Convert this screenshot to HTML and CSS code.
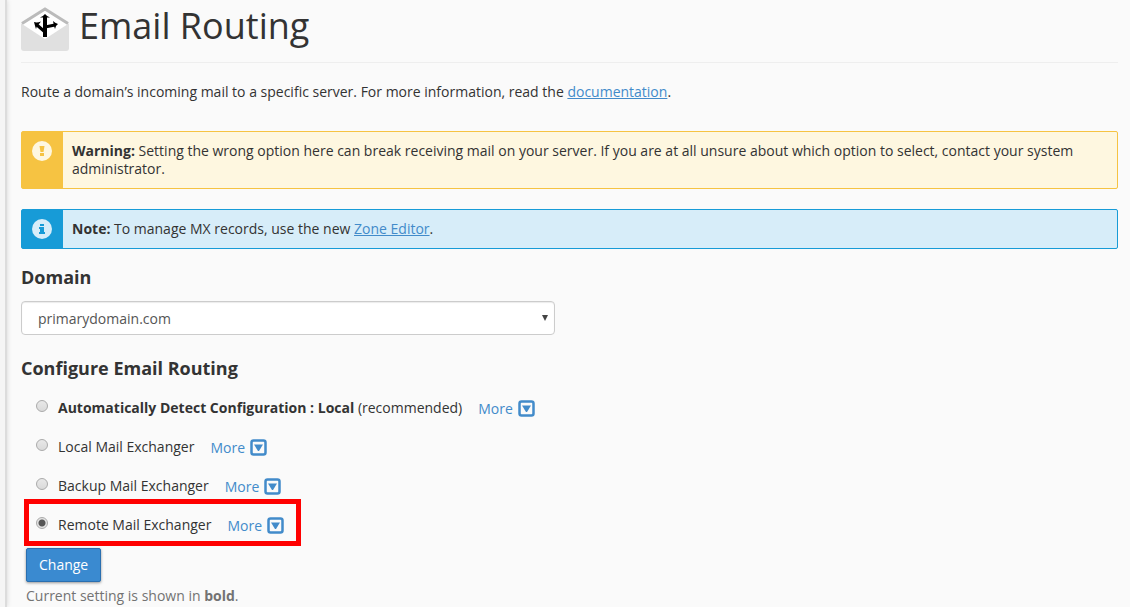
FILE: index.html
```html
<!DOCTYPE html>
<html lang="en">

<head>
    <meta charset="UTF-8">
    <meta name="viewport" content="width=device-width, initial-scale=1.0">
    <title>Email Routing</title>
    <link rel="stylesheet" href="styles.css">
</head>

<body>
    <div class="sidebar"></div>
    <main class="content">
        <h1 class="page-header">
            <svg class="page-icon" width="48" height="44" viewBox="0 0 48 44">
                <path d="M0 17 24 2l24 15v24a3 3 0 0 1-3 3H3a3 3 0 0 1-3-3z" fill="#e0e0e0" />
                <path d="M1 17 24 3l23 14-23 15z" fill="#fff" />
                <path d="M1 16.500 24 2l23 14.500" fill="none" stroke="#bbb" stroke-width="3" />
                <path d="M24 30V9" fill="none" stroke="#000" stroke-width="4" />
                <path d="M24 25l-8-7M24 20l10-2" fill="none" stroke="#000" stroke-width="3" />
                <path d="M19 10.500q3-1 5-3.500 2 2.500 5 3.500zM13 15q3 1 7-.5l-2 2.500-2 2-1 3q-1-3-2-7zM32 14q2 2 5 3-3 2-3 5l-1-3z" fill="#000" />
            </svg>
            <span>Email Routing</span>
        </h1>
        <p class="desc">Route a domain’s incoming mail to a specific server. For more information, read the <a href="#">documentation</a>.</p>

        <div class="alert alert-warning">
            <div class="alert-icon">
                <svg width="20" height="20" viewBox="0 0 20 20">
                    <circle cx="10" cy="10" r="10" fill="#fef7e0" />
                    <path d="M7.500 5h5l-1 6h-3zM8 12h4v3H8z" fill="#f6c342" />
                </svg>
            </div>
            <div class="alert-message"><strong>Warning:</strong> Setting the wrong option here can break receiving mail on your server. If you are at all unsure about which option to select, contact your system administrator.</div>
        </div>

        <div class="alert alert-info">
            <div class="alert-icon">
                <svg width="20" height="20" viewBox="0 0 20 20">
                    <circle cx="10" cy="10" r="10" fill="#d7edf9" />
                    <path d="M8 5h4v2H8zM7 8h5v5h1v2H7v-2h1v-3H7z" fill="#179bd7" />
                </svg>
            </div>
            <div class="alert-message"><strong>Note:</strong> To manage MX records, use the new <a href="#">Zone Editor</a>.</div>
        </div>

        <form>
            <h2 class="title"><label for="domain">Domain</label></h2>
            <div class="select-box">
                <select class="select" id="domain">
                    <option>primarydomain.com</option>
                </select>
                <svg class="caret" width="6" height="6" viewBox="0 0 6 6">
                    <path d="M0 0h6L3 6z" fill="#444" />
                </svg>
            </div>

            <h2 class="title">Configure Email Routing</h2>
            <div class="option">
                <input class="radio" type="radio" name="routing" id="auto">
                <label for="auto"><strong>Automatically Detect Configuration : Local</strong> (recommended)</label>
                <a class="more" href="#">More
                    <svg width="17" height="17" viewBox="0 0 17 17">
                        <rect x="1.5" y="1.5" width="14" height="14" rx="2" fill="none" stroke="#428bca" stroke-width="2.5" />
                        <path d="M4 5.500h9L9 12H8z" fill="#428bca" />
                    </svg>
                </a>
            </div>
            <div class="option">
                <input class="radio" type="radio" name="routing" id="local">
                <label for="local">Local Mail Exchanger</label>
                <a class="more" href="#">More
                    <svg width="17" height="17" viewBox="0 0 17 17">
                        <rect x="1.5" y="1.5" width="14" height="14" rx="2" fill="none" stroke="#428bca" stroke-width="2.5" />
                        <path d="M4 5.500h9L9 12H8z" fill="#428bca" />
                    </svg>
                </a>
            </div>
            <div class="option">
                <input class="radio" type="radio" name="routing" id="backup">
                <label for="backup">Backup Mail Exchanger</label>
                <a class="more" href="#">More
                    <svg width="17" height="17" viewBox="0 0 17 17">
                        <rect x="1.5" y="1.5" width="14" height="14" rx="2" fill="none" stroke="#428bca" stroke-width="2.5" />
                        <path d="M4 5.500h9L9 12H8z" fill="#428bca" />
                    </svg>
                </a>
            </div>
            <div class="option marked">
                <input class="radio" type="radio" name="routing" id="remote" checked>
                <label for="remote">Remote Mail Exchanger</label>
                <a class="more" href="#">More
                    <svg width="17" height="17" viewBox="0 0 17 17">
                        <rect x="1.5" y="1.5" width="14" height="14" rx="2" fill="none" stroke="#428bca" stroke-width="2.5" />
                        <path d="M4 5.500h9L9 12H8z" fill="#428bca" />
                    </svg>
                </a>
            </div>

            <div class="actions">
                <button class="btn" type="button">Change</button>
                <p class="help">Current setting is shown in <strong>bold</strong>.</p>
            </div>
        </form>
    </main>
</body>

</html>
```

FILE: styles.css
```css
* {
    box-sizing: border-box;
}

body {
    margin: 0;
    display: flex;
    min-height: 100vh;
    background: #fafafa;
    color: #333;
    font: 14px/18px "Open Sans", "Noto Sans", sans-serif;
}

a {
    color: #428bca;
}

strong {
    font-weight: 700;
}

svg {
    display: block;
    flex: none;
}

.sidebar {
    width: 7px;
    flex: none;
    background: #f5f5f5;
    border-right: 2px solid #dcdcdc;
    box-shadow: 0 0 5px rgba(0, 0, 0, 0.15);
}

.content {
    flex: 1;
    padding: 0 12px 0 14px;
}

.page-header {
    display: flex;
    gap: 10px;
    margin: 0 0 20px;
    padding: 6px 0 11px;
    border-bottom: 1px solid #eee;
    font-size: 36px;
    font-weight: 400;
    line-height: 40px;
}

.page-icon {
    margin-top: 1px;
}

.desc {
    margin: 0 0 30px;
}

.alert {
    display: flex;
    margin-bottom: 20px;
    border: 1px solid;
    border-radius: 2px;
}

.alert-icon {
    width: 41px;
    padding: 9px 10px;
}

.alert-message {
    flex: 1;
    padding: 10px 9px;
}

.alert-warning {
    border-color: #f6c342;
    background: #fef7e0;
}

.alert-warning .alert-icon {
    background: #f6c342;
}

.alert-info {
    margin-bottom: 18px;
    border-color: #179bd7;
    background: #d7edf9;
}

.alert-info .alert-icon {
    background: #179bd7;
}

.title {
    margin: 0 0 10px;
    font-size: 18px;
    font-weight: 700;
    line-height: 20px;
}

.select-box {
    position: relative;
    width: 50%;
    max-width: 534px;
    padding-top: 4px;
    margin-bottom: 23px;
}

.select {
    display: block;
    width: 100%;
    height: 34px;
    padding: 2px 16px 0;
    appearance: none;
    border: 1px solid #ccc;
    border-radius: 4px;
    background: #fff;
    box-shadow: inset 0 1px 1px rgba(0, 0, 0, 0.08);
    color: #555;
    font: inherit;
}

.caret {
    position: absolute;
    right: 7px;
    top: 18px;
}

.option {
    position: relative;
    display: flex;
    align-items: center;
    width: max-content;
    height: 39px;
    padding-left: 15px;
}

.radio {
    appearance: none;
    width: 12px;
    height: 12px;
    margin: 0 10px 4px 0;
    border: 1px solid #aaa;
    border-radius: 50%;
    background: linear-gradient(#e8e8e8, #dadada);
}

.radio:checked {
    background: radial-gradient(circle, #555 3px, #e4e4e4 4px);
}

.more {
    display: flex;
    align-items: center;
    gap: 5px;
    margin: 2px 0 0 16px;
    text-decoration: none;
}

/* red frame round the option to pick */
.marked::after {
    content: "";
    position: absolute;
    inset: -6px -17px -2px 3px;
    border: 5px solid #f00;
    pointer-events: none;
}

.actions {
    padding: 4px 5px 0;
}

.btn {
    display: block;
    height: 34px;
    padding: 0 12px;
    border: 1px solid #2a6fb0;
    border-radius: 2px;
    background: #3a8ad0;
    box-shadow: 0 1px 3px rgba(0, 0, 0, 0.4);
    color: #fff;
    font: inherit;
    cursor: pointer;
}

.help {
    margin: 5px 0 0;
    color: #737373;
}
```
